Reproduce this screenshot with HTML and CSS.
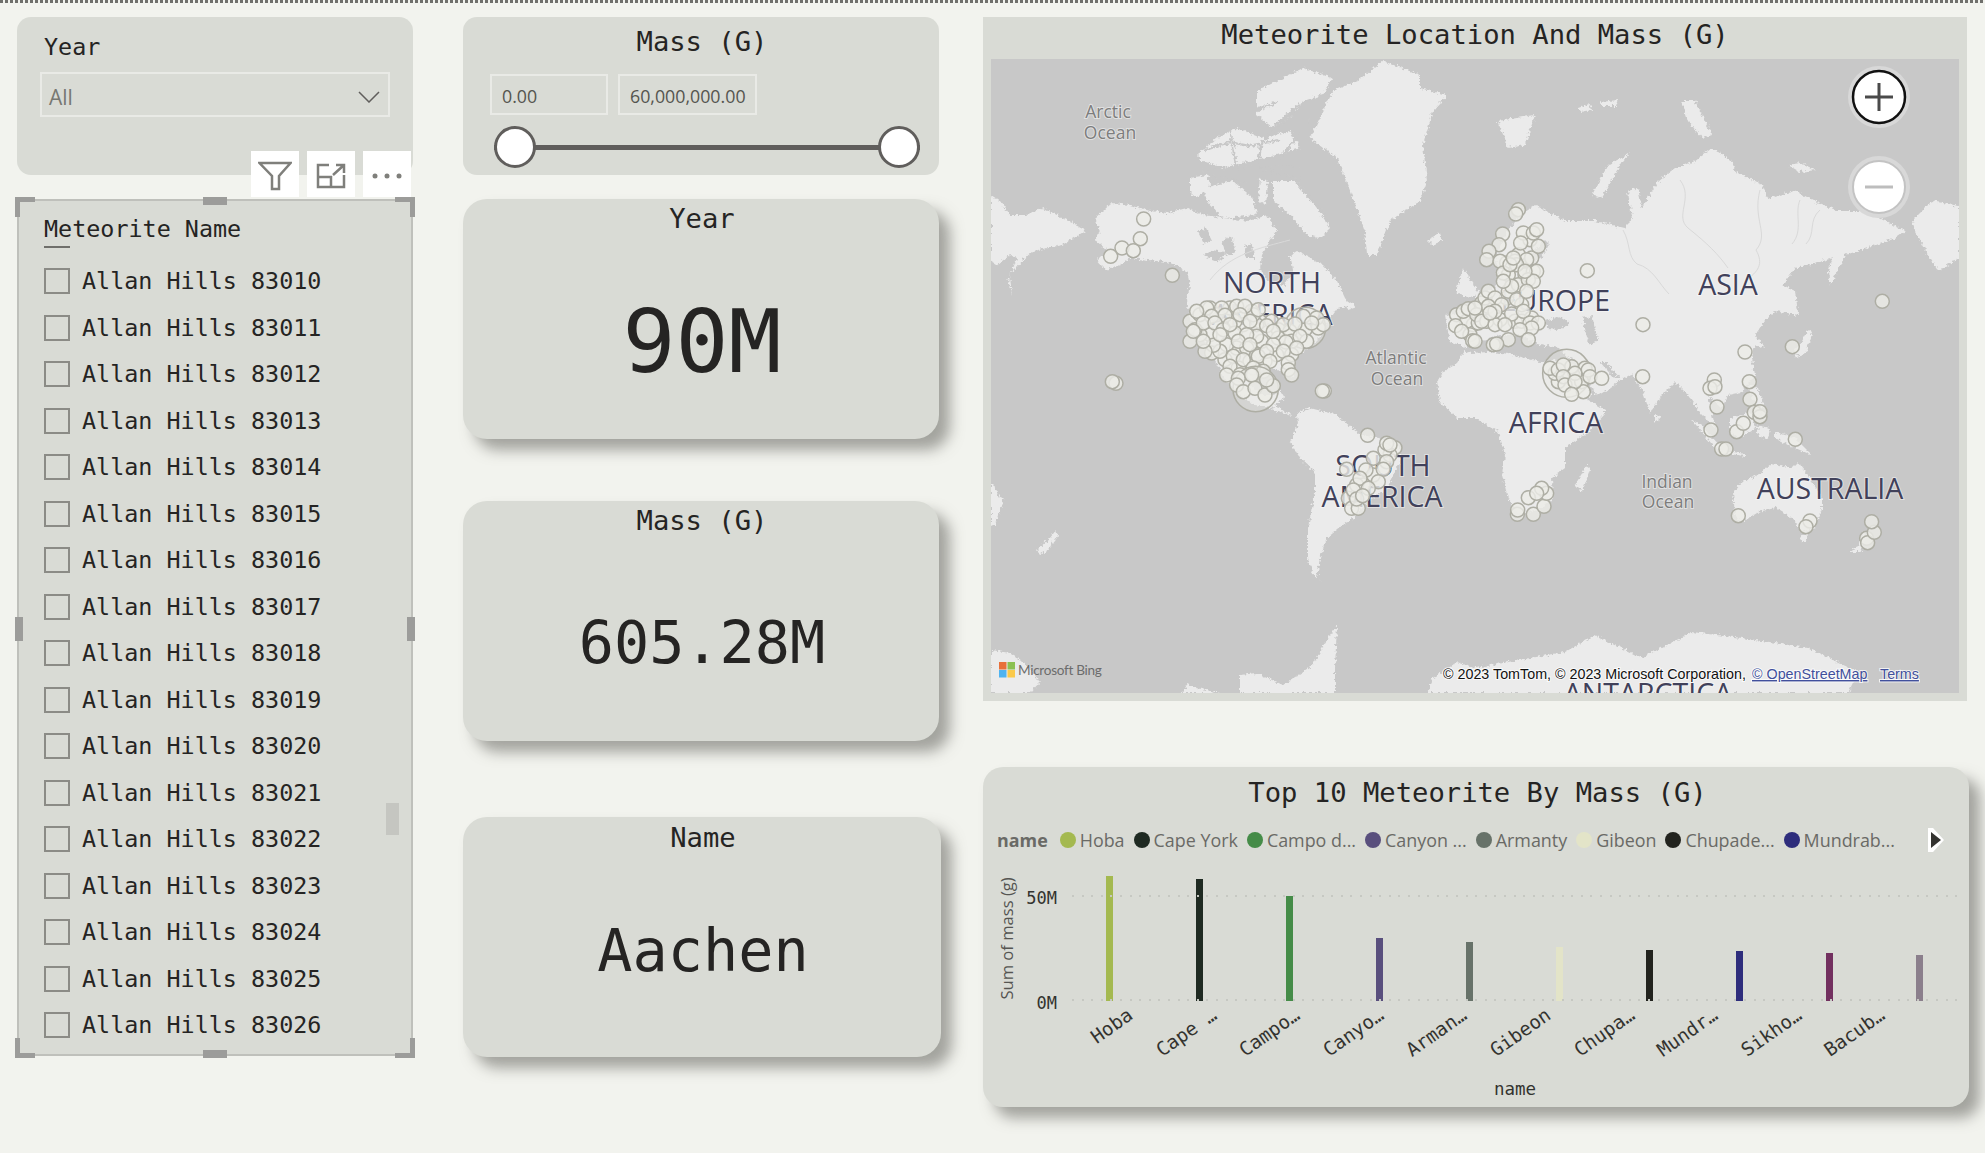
FILE: index.html
```html
<!DOCTYPE html>
<html lang="en">
<head>
<meta charset="utf-8">
<title>Meteorite report</title>
<link rel="stylesheet" href="styles.css">
</head>
<body>
<div class="dots"></div>
<main class="page">
  <section class="col col-left">
    <div class="panel slicer-year">
      <div class="slicer-title">Year</div>
      <div class="dropdown"><span>All</span>
        <svg class="chev" viewBox="0 0 22 12"><path d="M1 1l10 10L21 1"/></svg>
      </div>
    </div>
    <div class="list-visual">
      <div class="list-head"><span class="list-title">Meteorite Name</span><i class="head-rule"></i></div>
      <ul class="list">
        <li><i class="box"></i>Allan Hills 83010</li>
        <li><i class="box"></i>Allan Hills 83011</li>
        <li><i class="box"></i>Allan Hills 83012</li>
        <li><i class="box"></i>Allan Hills 83013</li>
        <li><i class="box"></i>Allan Hills 83014</li>
        <li><i class="box"></i>Allan Hills 83015</li>
        <li><i class="box"></i>Allan Hills 83016</li>
        <li><i class="box"></i>Allan Hills 83017</li>
        <li><i class="box"></i>Allan Hills 83018</li>
        <li><i class="box"></i>Allan Hills 83019</li>
        <li><i class="box"></i>Allan Hills 83020</li>
        <li><i class="box"></i>Allan Hills 83021</li>
        <li><i class="box"></i>Allan Hills 83022</li>
        <li><i class="box"></i>Allan Hills 83023</li>
        <li><i class="box"></i>Allan Hills 83024</li>
        <li><i class="box"></i>Allan Hills 83025</li>
        <li><i class="box"></i>Allan Hills 83026</li>
      </ul>
      <i class="scroll-thumb"></i>
      <i class="h h-tl"></i><i class="h h-tr"></i><i class="h h-bl"></i><i class="h h-br"></i>
      <i class="m m-t"></i><i class="m m-b"></i><i class="m m-l"></i><i class="m m-r"></i>
      <div class="toolbar">
        <span class="tool"><svg viewBox="0 0 34 30"><path d="M1.5 2h31L21 15v13h-7V15z"/></svg></span>
        <span class="tool"><svg viewBox="0 0 30 26"><path d="M13 2H2v22h26V12M2 14h13v10M17 12L28 2M20 2h8v8"/></svg></span>
        <span class="tool"><svg viewBox="0 0 32 8"><circle cx="4" cy="4" r="2.5"/><circle cx="16" cy="4" r="2.5"/><circle cx="28" cy="4" r="2.5"/></svg></span>
      </div>
    </div>
  </section>

  <section class="col col-mid">
    <div class="panel slicer-mass">
      <div class="slicer-title centered">Mass (G)</div>
      <div class="range-inputs"><span class="range-in w1">0.00</span><span class="range-in w2">60,000,000.00</span></div>
      <div class="slider"><i class="thumb"></i><i class="thumb"></i></div>
    </div>
    <div class="card card-year">
      <div class="card-title">Year</div>
      <div class="card-value v-big">90M</div>
    </div>
    <div class="card card-mass">
      <div class="card-title">Mass (G)</div>
      <div class="card-value v-mass">605.28M</div>
    </div>
    <div class="card card-name">
      <div class="card-title">Name</div>
      <div class="card-value v-name">Aachen</div>
    </div>
  </section>

  <section class="col col-right">
    <div class="map-visual">
      <h2 class="vis-title map-title">Meteorite Location And Mass (G)</h2>
      <svg class="map" viewBox="991 59 968 634">
        <defs>
          <filter id="rough" x="0" y="0" width="1" height="1" filterUnits="objectBoundingBox">
            <feTurbulence type="fractalNoise" baseFrequency="0.32" numOctaves="3" seed="4"/>
            <feDisplacementMap in="SourceGraphic" scale="6" xChannelSelector="R" yChannelSelector="G"/>
            <feGaussianBlur stdDeviation="0.4"/>
          </filter>
        </defs>
        <rect class="ocean" x="991" y="59" width="968" height="634"/>
        <g class="rough">
          <rect class="ghost" x="991" y="59" width="968" height="634"/>
          <g class="land">
            <polygon points="991,195 1000,201 1010,215 1027,215 1043,208 1057,215 1073,223 1085,231 1077,236 1062,245 1033,251 1022,261 1010,275 1012,296 1008,281 1017,258 1010,255 997,265 991,261"/>
            <polygon points="1095,218 1112,203 1130,205 1150,211 1167,213 1187,208 1203,215 1223,218 1250,221 1267,215 1277,231 1270,241 1262,255 1260,268 1268,281 1285,285 1293,270 1290,255 1297,251 1310,258 1323,265 1337,281 1345,298 1350,306 1337,308 1328,321 1322,335 1312,345 1300,355 1290,365 1295,378 1285,372 1270,368 1255,372 1250,385 1262,395 1275,395 1280,390 1285,398 1275,405 1283,410 1293,416 1285,414 1270,408 1255,405 1240,395 1225,380 1215,360 1200,335 1190,318 1187,300 1190,285 1187,272 1178,266 1167,262 1157,261 1130,258 1120,265 1105,270 1097,260 1107,250 1095,240 1100,232"/>
            <polygon points="1310,138 1333,91 1357,81 1383,61 1420,75 1420,88 1447,95 1433,111 1423,145 1427,181 1420,201 1390,221 1377,255 1367,255 1365,231 1353,198 1337,158 1323,148"/>
            <polygon points="1257,91 1277,81 1303,68 1332,78 1323,95 1303,101 1290,118 1273,128 1257,115"/>
            <polygon points="1197,155 1217,138 1237,128 1263,138 1290,131 1300,148 1277,155 1250,161 1223,168 1203,161"/>
            <polygon points="1190,178 1207,175 1210,185 1197,198 1190,191"/>
            <polygon points="1203,188 1233,181 1253,198 1257,215 1223,218 1207,201"/>
            <polygon points="1273,181 1297,181 1317,208 1330,228 1320,238 1307,235 1290,215 1273,201"/>
            <polygon points="1260,178 1268,182 1266,205 1258,200"/>
            <polygon points="1427,240 1440,233 1442,241 1432,245"/>
            <polygon points="1456,292 1463,268 1473,285 1480,293 1468,298"/>
            <polygon points="1346,304 1352,302 1354,308 1348,310"/>
            <polygon points="1535,205 1565,221 1595,221 1625,228 1632,218 1628,191 1638,188 1642,208 1658,181 1675,168 1695,161 1712,148 1732,161 1735,171 1762,185 1768,198 1795,191 1815,201 1838,211 1868,211 1898,228 1905,231 1895,238 1858,251 1845,255 1838,271 1830,285 1828,271 1833,258 1822,261 1795,268 1783,285 1795,291 1798,315 1775,311 1765,321 1755,335 1765,348 1755,345 1752,358 1755,375 1742,392 1728,395 1722,408 1708,395 1715,428 1702,415 1688,395 1675,382 1662,395 1650,413 1643,392 1632,375 1622,378 1605,392 1585,398 1605,410 1605,414 1588,432 1565,448 1565,468 1552,478 1553,498 1542,508 1518,515 1508,498 1502,475 1505,455 1498,432 1475,418 1470,418 1457,418 1440,402 1437,382 1445,370 1457,363 1465,350 1460,345 1450,342 1445,315 1470,312 1480,310 1475,295 1495,288 1500,270 1495,260 1505,235 1520,215"/>
            <polygon points="1497,275 1503,262 1508,275 1503,280"/>
            <polygon points="1297,413 1310,408 1337,415 1360,435 1380,438 1400,448 1400,462 1387,488 1367,502 1353,518 1343,525 1327,538 1320,558 1317,578 1323,583 1313,575 1308,558 1308,528 1315,492 1315,472 1300,458 1290,442 1298,425"/>
            <polygon points="1733,492 1742,482 1758,475 1772,463 1792,468 1798,462 1808,475 1822,498 1822,508 1815,528 1802,532 1792,518 1775,508 1758,512 1742,522 1735,515"/>
            <polygon points="1801,535 1808,535 1806,542 1802,541"/>
            <polygon points="1775,432 1795,438 1812,455 1795,448 1775,438"/>
            <polygon points="1730,418 1752,412 1755,428 1740,438 1730,432"/>
            <polygon points="1692,420 1700,424 1722,448 1716,449"/>
            <polygon points="1722,450 1745,454 1745,456 1722,453"/>
            <polygon points="1755,425 1770,428 1768,440 1760,436"/>
            <polygon points="1748,385 1758,388 1764,408 1752,400"/>
            <polygon points="1794,350 1800,345 1808,330 1812,333 1806,352 1796,358"/>
            <polygon points="1790,295 1795,294 1798,312 1793,312"/>
            <polygon points="1575,485 1587,465 1590,470 1582,492"/>
            <polygon points="1655,414 1660,416 1659,422 1655,421"/>
            <polygon points="1850,552 1858,546 1864,532 1866,540 1860,552"/>
            <polygon points="1592,195 1608,165 1630,153 1622,162 1602,198"/>
            <polygon points="1498,121 1535,115 1525,145 1508,148"/>
            <polygon points="1578,108 1590,104 1592,110 1580,112"/>
            <polygon points="1600,102 1618,100 1616,106 1602,106"/>
            <polygon points="1682,101 1695,101 1712,135 1702,138 1688,121"/>
            <polygon points="1788,165 1800,163 1816,170 1800,172"/>
            <polygon points="1912,221 1932,201 1959,206 1959,258 1938,271 1928,255 1915,231"/>
            <polygon points="991,482 1003,502 995,525 991,527"/>
            <polygon points="1037,550 1050,538 1056,530 1058,536 1046,552 1040,554"/>
            <polygon points="991,650 1010,653 1030,668 1040,682 1030,693 991,693"/>
            <polygon points="1183,693 1187,684 1197,688 1220,693"/>
            <polygon points="1240,693 1240,675 1257,673 1283,685 1310,668 1330,635 1337,625 1335,668 1335,693"/>
            <polygon points="1427,693 1433,678 1457,662 1475,668 1508,662 1565,652 1595,635 1642,658 1692,632 1742,638 1808,648 1858,672 1848,693"/>
          </g>
          <g class="water">
            <polygon points="1462,348 1480,342 1500,335 1520,335 1540,345 1560,348 1568,358 1540,362 1510,354 1490,352 1470,353"/>
            <polygon points="1545,321 1560,316 1570,323 1560,330 1548,329"/>
            <polygon points="1583,318 1592,316 1598,340 1590,346 1586,335"/>
            <polygon points="1568,358 1572,358 1600,400 1596,402"/>
            <polygon points="1600,362 1606,362 1620,378 1614,378"/>
            <polygon points="1520,285 1525,260 1545,240 1550,245 1535,265 1530,285"/>
            <polygon points="1204,256 1212,250 1225,252 1220,262"/>
            <polygon points="1198,232 1206,228 1212,240 1204,244"/>
            <polygon points="1222,240 1232,236 1236,252 1226,256"/>
            <polygon points="1244,246 1252,244 1254,258 1246,258"/>
          </g>
          <g class="channels">
            <path d="M1257 110l20-8M1270 130l30-26M1205 150l24-8 20 4 30-6M1230 128l6 38M1262 140l-4 24M1200 170l100-4M1212 176l34 6M1260 172l44 6M1290 175l40 46M1296 110l-32 30M1310 120l-40 52"/>
          </g>
        </g>
        <g class="rivers">
          <path d="M1623 230c8 14 4 26 14 34 16 4 22 20 32 30M1680 180c14 18-6 36 8 48 20 16 30 26 40 40M1760 190c-8 30 10 44-4 60 8 14 2 22-10 30M1800 200c-6 14 4 30-8 44M1820 210c-12 10-4 24-14 34M1290 240c-30 8-60 14-80 40"/>
        </g>
        <text class="ocean-label" x="1108" y="118" text-anchor="middle">Arctic</text>
        <text class="ocean-label" x="1110" y="139" text-anchor="middle">Ocean</text>
        <text class="ocean-label" x="1396" y="364" text-anchor="middle">Atlantic</text>
        <text class="ocean-label" x="1397" y="385" text-anchor="middle">Ocean</text>
        <text class="ocean-label" x="1667" y="488" text-anchor="middle">Indian</text>
        <text class="ocean-label" x="1668" y="508" text-anchor="middle">Ocean</text>
        <text class="region" x="1272" y="293" text-anchor="middle">NORTH</text>
        <text class="region" x="1272" y="325" text-anchor="middle">AMERICA</text>
        <text class="region" x="1610" y="311" text-anchor="end">EUROPE</text>
        <text class="region" x="1728" y="295" text-anchor="middle">ASIA</text>
        <text class="region" x="1556" y="433" text-anchor="middle">AFRICA</text>
        <text class="region" x="1383" y="476" text-anchor="middle">SOUTH</text>
        <text class="region" x="1382" y="507" text-anchor="middle">AMERICA</text>
        <text class="region" x="1830" y="499" text-anchor="middle">AUSTRALIA</text>
        <text class="region" x="1648" y="704" text-anchor="middle">ANTARCTICA</text>

        <g transform="translate(990 58) scale(.3333)">
          <circle class="pin" cx="461" cy="483"/><circle class="pin" cx="451" cy="542"/><circle class="pin" cx="396" cy="570"/><circle class="pin" cx="430" cy="578"/><circle class="pin" cx="362" cy="595"/><circle class="pin" cx="547" cy="652"/>
          <circle class="pin big-a" cx="945" cy="810"/>
          <circle class="pin" cx="600" cy="790"/><circle class="pin" cx="630" cy="770"/><circle class="pin" cx="660" cy="750"/><circle class="pin" cx="680" cy="770"/><circle class="pin" cx="720" cy="750"/><circle class="pin" cx="785" cy="760"/><circle class="pin" cx="760" cy="800"/><circle class="pin" cx="810" cy="790"/><circle class="pin" cx="845" cy="790"/><circle class="pin" cx="865" cy="815"/><circle class="pin" cx="900" cy="820"/><circle class="pin" cx="945" cy="815"/><circle class="pin" cx="985" cy="810"/><circle class="pin" cx="950" cy="850"/><circle class="pin" cx="905" cy="850"/><circle class="pin" cx="860" cy="890"/><circle class="pin" cx="815" cy="850"/><circle class="pin" cx="825" cy="910"/><circle class="pin" cx="780" cy="910"/><circle class="pin" cx="740" cy="870"/><circle class="pin" cx="710" cy="860"/><circle class="pin" cx="660" cy="830"/><circle class="pin" cx="630" cy="830"/><circle class="pin" cx="600" cy="850"/><circle class="pin" cx="665" cy="885"/><circle class="pin" cx="705" cy="905"/><circle class="pin" cx="745" cy="930"/><circle class="pin" cx="770" cy="870"/><circle class="pin" cx="800" cy="800"/><circle class="pin" cx="735" cy="790"/><circle class="pin" cx="865" cy="840"/><circle class="pin" cx="905" cy="890"/><circle class="pin" cx="980" cy="780"/><circle class="pin" cx="1000" cy="800"/><circle class="pin" cx="940" cy="775"/><circle class="pin" cx="790" cy="770"/>
          <circle class="pin" cx="650" cy="750"/><circle class="pin" cx="695" cy="750"/><circle class="pin" cx="740" cy="745"/><circle class="pin" cx="765" cy="745"/><circle class="pin" cx="620" cy="760"/><circle class="pin" cx="805" cy="755"/><circle class="pin" cx="705" cy="772"/><circle class="pin" cx="665" cy="775"/><circle class="pin" cx="615" cy="815"/><circle class="pin" cx="640" cy="795"/><circle class="pin" cx="675" cy="795"/><circle class="pin" cx="700" cy="815"/><circle class="pin" cx="735" cy="825"/><circle class="pin" cx="800" cy="835"/><circle class="pin" cx="830" cy="803"/><circle class="pin" cx="880" cy="800"/><circle class="pin" cx="915" cy="798"/><circle class="pin" cx="965" cy="795"/><circle class="pin" cx="930" cy="835"/><circle class="pin" cx="888" cy="852"/><circle class="pin" cx="850" cy="860"/><circle class="pin" cx="920" cy="870"/><circle class="pin" cx="880" cy="880"/><circle class="pin" cx="800" cy="890"/><circle class="pin" cx="805" cy="895"/><circle class="pin" cx="730" cy="895"/><circle class="pin" cx="690" cy="880"/><circle class="pin" cx="670" cy="862"/><circle class="pin" cx="645" cy="880"/><circle class="pin" cx="640" cy="850"/><circle class="pin" cx="610" cy="820"/><circle class="pin" cx="750" cy="770"/><circle class="pin" cx="780" cy="790"/><circle class="pin" cx="770" cy="830"/><circle class="pin" cx="745" cy="850"/><circle class="pin" cx="720" cy="800"/><circle class="pin" cx="690" cy="830"/><circle class="pin" cx="780" cy="860"/><circle class="pin" cx="830" cy="880"/><circle class="pin" cx="850" cy="820"/><circle class="pin" cx="895" cy="915"/><circle class="pin" cx="895" cy="935"/><circle class="pin" cx="720" cy="925"/><circle class="pin" cx="760" cy="905"/><circle class="pin" cx="790" cy="930"/><circle class="pin" cx="840" cy="910"/><circle class="pin" cx="750" cy="950"/><circle class="pin" cx="790" cy="950"/><circle class="pin" cx="820" cy="940"/>
          <circle class="pin" cx="1400" cy="770"/><circle class="pin" cx="1450" cy="800"/><circle class="pin" cx="1430" cy="790"/><circle class="pin" cx="1470" cy="760"/><circle class="pin" cx="1440" cy="830"/><circle class="pin" cx="1420" cy="760"/>
          <circle class="pin" cx="1397" cy="803"/><circle class="pin" cx="1435" cy="752"/><circle class="pin" cx="1465" cy="795"/><circle class="pin" cx="1415" cy="820"/><circle class="pin" cx="1448" cy="848"/>
        </g>
        <g transform="translate(1475 58) scale(.3333)">
          <circle class="pin" cx="20" cy="735"/><circle class="pin" cx="5" cy="770"/><circle class="pin" cx="35" cy="790"/><circle class="pin" cx="75" cy="785"/><circle class="pin" cx="120" cy="790"/><circle class="pin" cx="140" cy="790"/><circle class="pin" cx="60" cy="800"/><circle class="pin" cx="30" cy="720"/><circle class="pin" cx="95" cy="720"/><circle class="pin" cx="100" cy="700"/><circle class="pin" cx="140" cy="740"/><circle class="pin" cx="170" cy="780"/><circle class="pin" cx="150" cy="650"/><circle class="pin" cx="175" cy="640"/><circle class="pin" cx="130" cy="680"/><circle class="pin" cx="95" cy="615"/><circle class="pin" cx="130" cy="590"/><circle class="pin" cx="170" cy="600"/><circle class="pin" cx="165" cy="545"/><circle class="pin" cx="100" cy="650"/>
          <circle class="pin" cx="130" cy="455"/><circle class="pin" cx="122" cy="468"/><circle class="pin" cx="83" cy="528"/><circle class="pin" cx="72" cy="560"/><circle class="pin" cx="42" cy="580"/><circle class="pin" cx="35" cy="605"/><circle class="pin" cx="75" cy="610"/><circle class="pin" cx="145" cy="525"/><circle class="pin" cx="175" cy="525"/><circle class="pin" cx="185" cy="515"/><circle class="pin" cx="137" cy="555"/><circle class="pin" cx="190" cy="565"/><circle class="pin" cx="155" cy="605"/><circle class="pin" cx="120" cy="610"/><circle class="pin" cx="125" cy="620"/><circle class="pin" cx="185" cy="640"/><circle class="pin" cx="85" cy="645"/><circle class="pin" cx="160" cy="665"/><circle class="pin" cx="175" cy="670"/><circle class="pin" cx="110" cy="685"/><circle class="pin" cx="40" cy="700"/><circle class="pin" cx="60" cy="720"/><circle class="pin" cx="125" cy="725"/><circle class="pin" cx="155" cy="700"/><circle class="pin" cx="80" cy="740"/><circle class="pin" cx="40" cy="745"/><circle class="pin" cx="60" cy="760"/><circle class="pin" cx="20" cy="790"/><circle class="pin" cx="45" cy="765"/><circle class="pin" cx="0" cy="750"/><circle class="pin" cx="110" cy="768"/><circle class="pin" cx="145" cy="760"/><circle class="pin" cx="90" cy="800"/><circle class="pin" cx="165" cy="795"/><circle class="pin" cx="190" cy="795"/><circle class="pin" cx="170" cy="810"/><circle class="pin" cx="135" cy="815"/><circle class="pin" cx="100" cy="845"/><circle class="pin" cx="160" cy="845"/><circle class="pin" cx="55" cy="860"/><circle class="pin" cx="65" cy="858"/><circle class="pin" cx="0" cy="850"/><circle class="pin" cx="105" cy="620"/><circle class="pin" cx="150" cy="640"/><circle class="pin" cx="115" cy="600"/><circle class="pin" cx="85" cy="670"/>
          <circle class="pin" cx="337" cy="638"/><circle class="pin" cx="504" cy="800"/><circle class="pin" cx="810" cy="882"/><circle class="pin" cx="952" cy="866"/><circle class="pin" cx="1222" cy="730"/>
        </g>
        <g transform="translate(990 375) scale(.3333)">
          <circle class="pin big-b" cx="797" cy="42"/>
          <circle class="pin" cx="710" cy="0"/><circle class="pin" cx="745" cy="10"/><circle class="pin" cx="785" cy="0"/><circle class="pin" cx="740" cy="30"/><circle class="pin" cx="760" cy="50"/><circle class="pin" cx="795" cy="40"/><circle class="pin" cx="825" cy="60"/><circle class="pin" cx="850" cy="32"/><circle class="pin" cx="830" cy="15"/><circle class="pin" cx="905" cy="0"/>
          <circle class="pin" cx="378" cy="25"/><circle class="pin" cx="367" cy="20"/><circle class="pin" cx="1003" cy="48"/><circle class="pin" cx="997" cy="48"/>
          <circle class="pin" cx="1133" cy="181"/><circle class="pin" cx="1215" cy="218"/><circle class="pin" cx="1200" cy="240"/><circle class="pin" cx="1185" cy="225"/><circle class="pin" cx="1190" cy="205"/><circle class="pin" cx="1200" cy="210"/><circle class="pin" cx="1150" cy="250"/><circle class="pin" cx="1190" cy="260"/><circle class="pin" cx="1150" cy="300"/><circle class="pin" cx="1128" cy="285"/><circle class="pin" cx="1180" cy="283"/><circle class="pin" cx="1165" cy="320"/><circle class="pin" cx="1070" cy="283"/><circle class="pin" cx="1120" cy="330"/><circle class="pin" cx="1100" cy="330"/><circle class="pin" cx="1075" cy="370"/><circle class="pin" cx="1110" cy="310"/><circle class="pin" cx="1135" cy="340"/><circle class="pin" cx="1090" cy="345"/><circle class="pin" cx="1085" cy="400"/><circle class="pin" cx="1105" cy="400"/><circle class="pin" cx="1100" cy="372"/><circle class="pin" cx="1118" cy="362"/>
        </g>
        <g transform="translate(1475 375) scale(.3333)">
          <circle class="pin big-c" cx="275" cy="-5"/>
          <circle class="pin" cx="250" cy="20"/><circle class="pin" cx="240" cy="-5"/><circle class="pin" cx="320" cy="20"/><circle class="pin" cx="330" cy="-20"/><circle class="pin" cx="290" cy="-25"/>
          <circle class="pin" cx="225" cy="-20"/><circle class="pin" cx="250" cy="-15"/><circle class="pin" cx="265" cy="-30"/><circle class="pin" cx="300" cy="-5"/><circle class="pin" cx="340" cy="-15"/><circle class="pin" cx="265" cy="5"/><circle class="pin" cx="270" cy="30"/><circle class="pin" cx="325" cy="50"/><circle class="pin" cx="345" cy="5"/><circle class="pin" cx="380" cy="10"/><circle class="pin" cx="300" cy="20"/><circle class="pin" cx="290" cy="58"/>
          <circle class="pin" cx="503" cy="5"/><circle class="pin" cx="718" cy="15"/><circle class="pin" cx="705" cy="40"/><circle class="pin" cx="720" cy="35"/><circle class="pin" cx="823" cy="20"/><circle class="pin" cx="825" cy="73"/><circle class="pin" cx="726" cy="96"/><circle class="pin" cx="838" cy="112"/><circle class="pin" cx="855" cy="125"/><circle class="pin" cx="855" cy="110"/><circle class="pin" cx="708" cy="165"/><circle class="pin" cx="785" cy="170"/><circle class="pin" cx="805" cy="145"/><circle class="pin" cx="740" cy="222"/><circle class="pin" cx="753" cy="222"/><circle class="pin" cx="961" cy="193"/><circle class="pin" cx="790" cy="422"/><circle class="pin" cx="1005" cy="438"/><circle class="pin" cx="993" cy="455"/><circle class="pin" cx="1175" cy="490"/><circle class="pin" cx="1178" cy="503"/><circle class="pin" cx="1198" cy="472"/><circle class="pin" cx="1190" cy="440"/><circle class="pin" cx="127" cy="418"/><circle class="pin" cx="128" cy="405"/><circle class="pin" cx="175" cy="418"/><circle class="pin" cx="207" cy="394"/><circle class="pin" cx="160" cy="368"/><circle class="pin" cx="215" cy="355"/><circle class="pin" cx="200" cy="340"/><circle class="pin" cx="185" cy="355"/>
        </g>

        <circle class="zoom-ring" cx="1879" cy="97" r="31"/>
        <circle class="zoom-plus" cx="1879" cy="97" r="26"/>
        <path class="zoom-glyph" d="M1865 97h28M1879 83v28"/>
        <circle class="zoom-ring" cx="1879" cy="187" r="31"/>
        <circle class="zoom-minus" cx="1879" cy="187" r="26"/>
        <path class="zoom-glyph off" d="M1865 187h28"/>

        <rect x="999" y="662" width="7.5" height="7.5" fill="#e8703a"/>
        <rect x="1007.5" y="662" width="7.5" height="7.5" fill="#8cc152"/>
        <rect x="999" y="670" width="7.5" height="7.5" fill="#4fb3f0"/>
        <rect x="1007.5" y="670" width="7.5" height="7.5" fill="#fbc94a"/>
        <text class="bing" x="1018" y="675">Microsoft Bing</text>
        <text class="copy" x="1443" y="679">© 2023 TomTom, © 2023 Microsoft Corporation, <tspan class="link" x="1752">© OpenStreetMap</tspan><tspan class="link" x="1880">Terms</tspan></text>
      </svg>
    </div>

    <div class="chart-visual">
      <h2 class="vis-title chart-title">Top 10 Meteorite By Mass (G)</h2>
      <div class="legend">
        <b class="legend-name">name</b>
        <span class="lg"><i style="background:#a4b950"></i>Hoba</span>
        <span class="lg"><i style="background:#1f2a22"></i>Cape York</span>
        <span class="lg"><i style="background:#458c48"></i>Campo d...</span>
        <span class="lg"><i style="background:#594f7d"></i>Canyon ...</span>
        <span class="lg"><i style="background:#677269"></i>Armanty</span>
        <span class="lg"><i style="background:#e3e4c8"></i>Gibeon</span>
        <span class="lg"><i style="background:#22231e"></i>Chupade...</span>
        <span class="lg"><i style="background:#2e2d7c"></i>Mundrab...</span>
        <svg class="legend-next" viewBox="0 0 16 24"><path class="a-w" d="M0 0h5l11 12L5 24H0z"/><path class="a-d" d="M3 4l10 8-10 8z"/></svg>
      </div>
      <div class="plot-row">
        <div class="y-title"><span>Sum of mass (g)</span></div>
        <div class="y-ticks"><span class="t50">50M</span><span class="t0">0M</span></div>
        <div class="plot">
          <i class="grid g50"></i><i class="grid g0"></i>
          <div class="bar-cell"><i class="bar" style="height:125px;background:#a4b950"></i></div>
          <div class="bar-cell"><i class="bar" style="height:122px;background:#1f2a22"></i></div>
          <div class="bar-cell"><i class="bar" style="height:105px;background:#458c48"></i></div>
          <div class="bar-cell"><i class="bar" style="height:63px;background:#594f7d"></i></div>
          <div class="bar-cell"><i class="bar" style="height:59px;background:#677269"></i></div>
          <div class="bar-cell"><i class="bar" style="height:54px;background:#e3e4c8"></i></div>
          <div class="bar-cell"><i class="bar" style="height:51px;background:#22231e"></i></div>
          <div class="bar-cell"><i class="bar" style="height:50px;background:#2e2d7c"></i></div>
          <div class="bar-cell"><i class="bar" style="height:48px;background:#72305f"></i></div>
          <div class="bar-cell"><i class="bar" style="height:46px;background:#8b7f8c"></i></div>
        </div>
      </div>
      <div class="x-labels">
        <span>Hoba</span><span>Cape …</span><span>Campo…</span><span>Canyo…</span><span>Arman…</span><span>Gibeon</span><span>Chupa…</span><span>Mundr…</span><span>Sikho…</span><span>Bacub…</span>
      </div>
      <div class="x-title">name</div>
    </div>
  </section>
</main>
</body>
</html>
```
FILE: styles.css
```css
* { box-sizing: border-box; }
html, body { margin: 0; padding: 0; }
body {
  width: 1985px;
  height: 1153px;
  overflow: hidden;
  background: #f2f3ee;
  color: #252423;
  font-family: "DejaVu Sans Mono", monospace;
  position: relative;
}
i { display: block; font-style: normal; }

.dots {
  height: 3px;
  background: repeating-linear-gradient(90deg, #6f6f6b 0 3px, #f2f3ee 3px 5px);
}
.page {
  display: flex;
  padding: 14px 0 0 17px;
}
.col { display: flex; flex-direction: column; }
.col-left { width: 396px; margin-right: 50px; position: relative; }
.col-mid { width: 478px; margin-right: 42px; }
.col-right { width: 986px; }

.panel {
  background: #d9dbd5;
  border-radius: 14px;
  height: 158px;
  flex: none;
}
.slicer-title {
  font-size: 23.4px;
  line-height: 30px;
  padding: 15px 0 0 27px;
}
.slicer-title.centered {
  font-size: 27.2px;
  line-height: 34px;
  padding: 8px 0 0 2px;
  text-align: center;
}
.dropdown {
  margin: 10px 23px 0 23px;
  height: 45px;
  border: 2px solid #e9eae6;
  display: flex;
  align-items: center;
  justify-content: space-between;
  padding: 4px 8px 0 7px;
  font: 21px "Open Sans", sans-serif;
  color: #777772;
}
.chev { width: 22px; height: 12px; fill: none; stroke: #605e5c; stroke-width: 1.5; }

.list-visual {
  margin-top: 24px;
  height: 857px;
  background: #d9dbd5;
  border: 2px solid #bfc0bb;
  position: relative;
  padding: 0 0 0 25px;
}
.list-head { height: 56.8px; padding-top: 13px; }
.list-title { display: block; font-size: 23.4px; line-height: 30px; }
.head-rule { width: 26px; height: 1.5px; background: #6f6f6b; margin-top: 2px; }
.list { list-style: none; margin: 0; padding: 0; }
.list li {
  height: 46.5px;
  display: flex;
  align-items: center;
  gap: 12px;
  font-size: 23.4px;
}
.box { width: 26px; height: 26px; border: 2px solid #8b8b86; flex: none; }
.scroll-thumb {
  position: absolute;
  left: 367px; top: 602px;
  width: 13px; height: 32px;
  background: #c5c6c1;
}
.h { position: absolute; width: 20px; height: 20px; border: 0 solid #9c9c9a; }
.h-tl { left: -4px; top: -4px; border-width: 5px 0 0 5px; }
.h-tr { right: -4px; top: -4px; border-width: 5px 5px 0 0; }
.h-bl { left: -4px; bottom: -4px; border-width: 0 0 5px 5px; }
.h-br { right: -4px; bottom: -4px; border-width: 0 5px 5px 0; }
.m { position: absolute; background: #9c9c9a; }
.m-t { left: 184px; top: -4px; width: 24px; height: 8px; }
.m-b { left: 184px; bottom: -4px; width: 24px; height: 8px; }
.m-l { left: -4px; top: 416px; width: 8px; height: 24px; }
.m-r { right: -4px; top: 416px; width: 8px; height: 24px; }

.toolbar {
  position: absolute;
  right: 0; top: -50px;
  display: flex;
  gap: 8px;
}
.tool {
  width: 48px; height: 46px;
  background: #fff;
  display: flex;
  align-items: center;
  justify-content: center;
  padding-top: 3px;
}
.tool svg { fill: none; stroke: #7f7f7b; stroke-width: 2.5; }
.tool:nth-child(1) svg { width: 34px; height: 30px; }
.tool:nth-child(2) svg { width: 30px; height: 26px; }
.tool:nth-child(3) svg { width: 32px; height: 8px; fill: #7f7f7b; stroke: none; }

.slicer-mass { width: 476px; }
.range-inputs { display: flex; gap: 10px; margin: 15px 0 0 27px; }
.range-in {
  height: 41px;
  border: 2px solid #e9eae6;
  display: flex;
  align-items: center;
  padding: 2px 0 0 10px;
  font: 17.8px "Open Sans", sans-serif;
  color: #55554f;
}
.w1 { width: 118px; }
.w2 { width: 139px; }
.slider {
  margin: 11px 19px 0 31px;
  height: 42px;
  display: flex;
  justify-content: space-between;
  align-items: center;
  background: linear-gradient(#605e5c, #605e5c) center / 100% 5px no-repeat;
}
.thumb {
  width: 42px; height: 42px;
  border-radius: 50%;
  background: #fff;
  border: 3px solid #605e5c;
}

.card {
  background: #d9dbd5;
  border-radius: 24px;
  height: 240px;
  flex: none;
  width: 476px;
  box-shadow: 11px 11px 14px rgba(85, 85, 80, .5);
  display: flex;
  flex-direction: column;
  align-items: center;
}
.card-year { margin-top: 24px; }
.card-mass { margin-top: 62px; }
.card-name { margin-top: 76px; width: 478px; }
.card-title { font-size: 27.2px; line-height: 34px; padding: 3px 0 0 2px; }
.card-name .card-title { padding-top: 4px; }
.card-value {
  flex: 1;
  display: flex;
  align-items: center;
  font-size: 58.5px;
  padding-left: 2px;
}
.v-big { font-size: 88px; padding-top: 8px; }
.v-mass { padding-top: 6px; }
.v-name { padding-bottom: 10px; }

.vis-title { margin: 0; font-weight: 400; font-size: 27.2px; text-align: center; }
.map-visual {
  height: 684px;
  background: #d9dbd5;
  padding: 0 8px;
  flex: none;
  width: 984px;
}
.map-title { height: 42px; line-height: 35px; }
.map { display: block; width: 968px; height: 634px; }
.ocean { fill: #c8c8c8; }
.ghost { fill: none; }
.rough { filter: url(#rough); }
.land polygon { fill: #ebebeb; }
.water polygon { fill: #c8c8c8; }
.channels path { fill: none; stroke: #c8c8c8; stroke-width: 2.5; }
.rivers path { fill: none; stroke: #d9d9d9; stroke-width: 1; }
.region {
  font: 400 28.5px "Open Sans", sans-serif;
  fill: #41415a;
  paint-order: stroke;
  stroke: rgba(255, 255, 255, .45);
  stroke-width: 2px;
}
.ocean-label {
  font: 400 17.5px "Open Sans", sans-serif;
  fill: #7d7d7d;
  paint-order: stroke;
  stroke: rgba(255, 255, 255, .45);
  stroke-width: 2px;
}
.pin {
  r: 21px;
  fill: #ecece6;
  fill-opacity: .82;
  stroke: #aeaea4;
  stroke-width: 4.5;
}
.big-a { r: 62px; fill-opacity: .35; }
.big-b { r: 68px; fill-opacity: .35; }
.big-c { r: 72px; fill-opacity: .35; }
.zoom-ring { fill: #d8d8d8; }
.zoom-plus { fill: #fff; stroke: #111; stroke-width: 2.5; }
.zoom-minus { fill: #fff; stroke: #c3c3c3; stroke-width: 2; }
.zoom-glyph { fill: none; stroke: #4a4a4a; stroke-width: 3; }
.zoom-glyph.off { stroke: #bdbdbd; }
.bing { font: 400 13.6px "Lato", sans-serif; letter-spacing: -.3px; fill: #6c6c6c; }
.copy {
  font: 14.3px "Liberation Sans", sans-serif;
  fill: #111;
  paint-order: stroke;
  stroke: rgba(255, 255, 255, .75);
  stroke-width: 2px;
}
.link { fill: #41509c; text-decoration: underline; }

.chart-visual {
  margin-top: 66px;
  height: 340px;
  background: #d9dbd5;
  border-radius: 20px;
  box-shadow: 11px 11px 14px rgba(85, 85, 80, .5);
  position: relative;
  flex: none;
}
.chart-title { height: 55px; line-height: 52px; padding-left: 3px; }
.legend {
  display: flex;
  align-items: center;
  height: 36px;
  padding-left: 14px;
  font: 17.9px "Open Sans", sans-serif;
  color: #6a6a66;
  gap: 9px;
}
.legend-name { font-weight: 700; margin-right: 3px; }
.lg { display: flex; align-items: center; gap: 4px; white-space: nowrap; }
.lg i { width: 16px; height: 16px; border-radius: 50%; flex: none; }
.legend-next { width: 16px; height: 24px; margin-left: 24px; }
.a-w { fill: #fff; }
.a-d { fill: #33332f; }

.plot-row { display: flex; height: 139px; margin-top: 8px; }
.y-title {
  width: 40px;
  position: relative;
}
.y-title span {
  position: absolute;
  left: 33px; bottom: 5px;
  transform-origin: 0 100%;
  transform: rotate(-90deg);
  font: 16.6px "Open Sans", sans-serif;
  color: #555552;
  white-space: nowrap;
  line-height: 1;
}
.y-ticks { width: 41px; position: relative; font-size: 17px; color: #33332f; }
.y-ticks span { position: absolute; right: 7px; line-height: 20px; }
.t50 { top: 22px; }
.t0 { top: 127px; }
.plot {
  flex: 1;
  display: grid;
  grid-template-columns: repeat(10, 90.1px);
  position: relative;
  height: 135px;
  margin-right: -10px;
}
.bar-cell { display: flex; justify-content: center; align-items: flex-end; }
.bar { width: 7px; }
.grid { position: absolute; left: 8px; width: 886px; height: 2px;
  background: repeating-linear-gradient(90deg, #c6c8c2 0 2px, transparent 2px 9.6px); }
.g50 { top: 29px; }
.g0 { top: 133px; }

.x-labels {
  display: grid;
  grid-template-columns: repeat(10, 83.6px);
  margin-left: 61px;
  margin-top: -3px;
  height: 60px;
  font-size: 19px;
  color: #33332f;
}
.x-labels span {
  text-align: right;
  white-space: nowrap;
  transform-origin: 100% 30%;
  transform: rotate(-35deg);
  line-height: 22px;
  height: 22px;
}
.x-title { position: absolute; left: 511px; top: 311px; font-size: 17.5px; line-height: 22px; color: #33332f; }
```
